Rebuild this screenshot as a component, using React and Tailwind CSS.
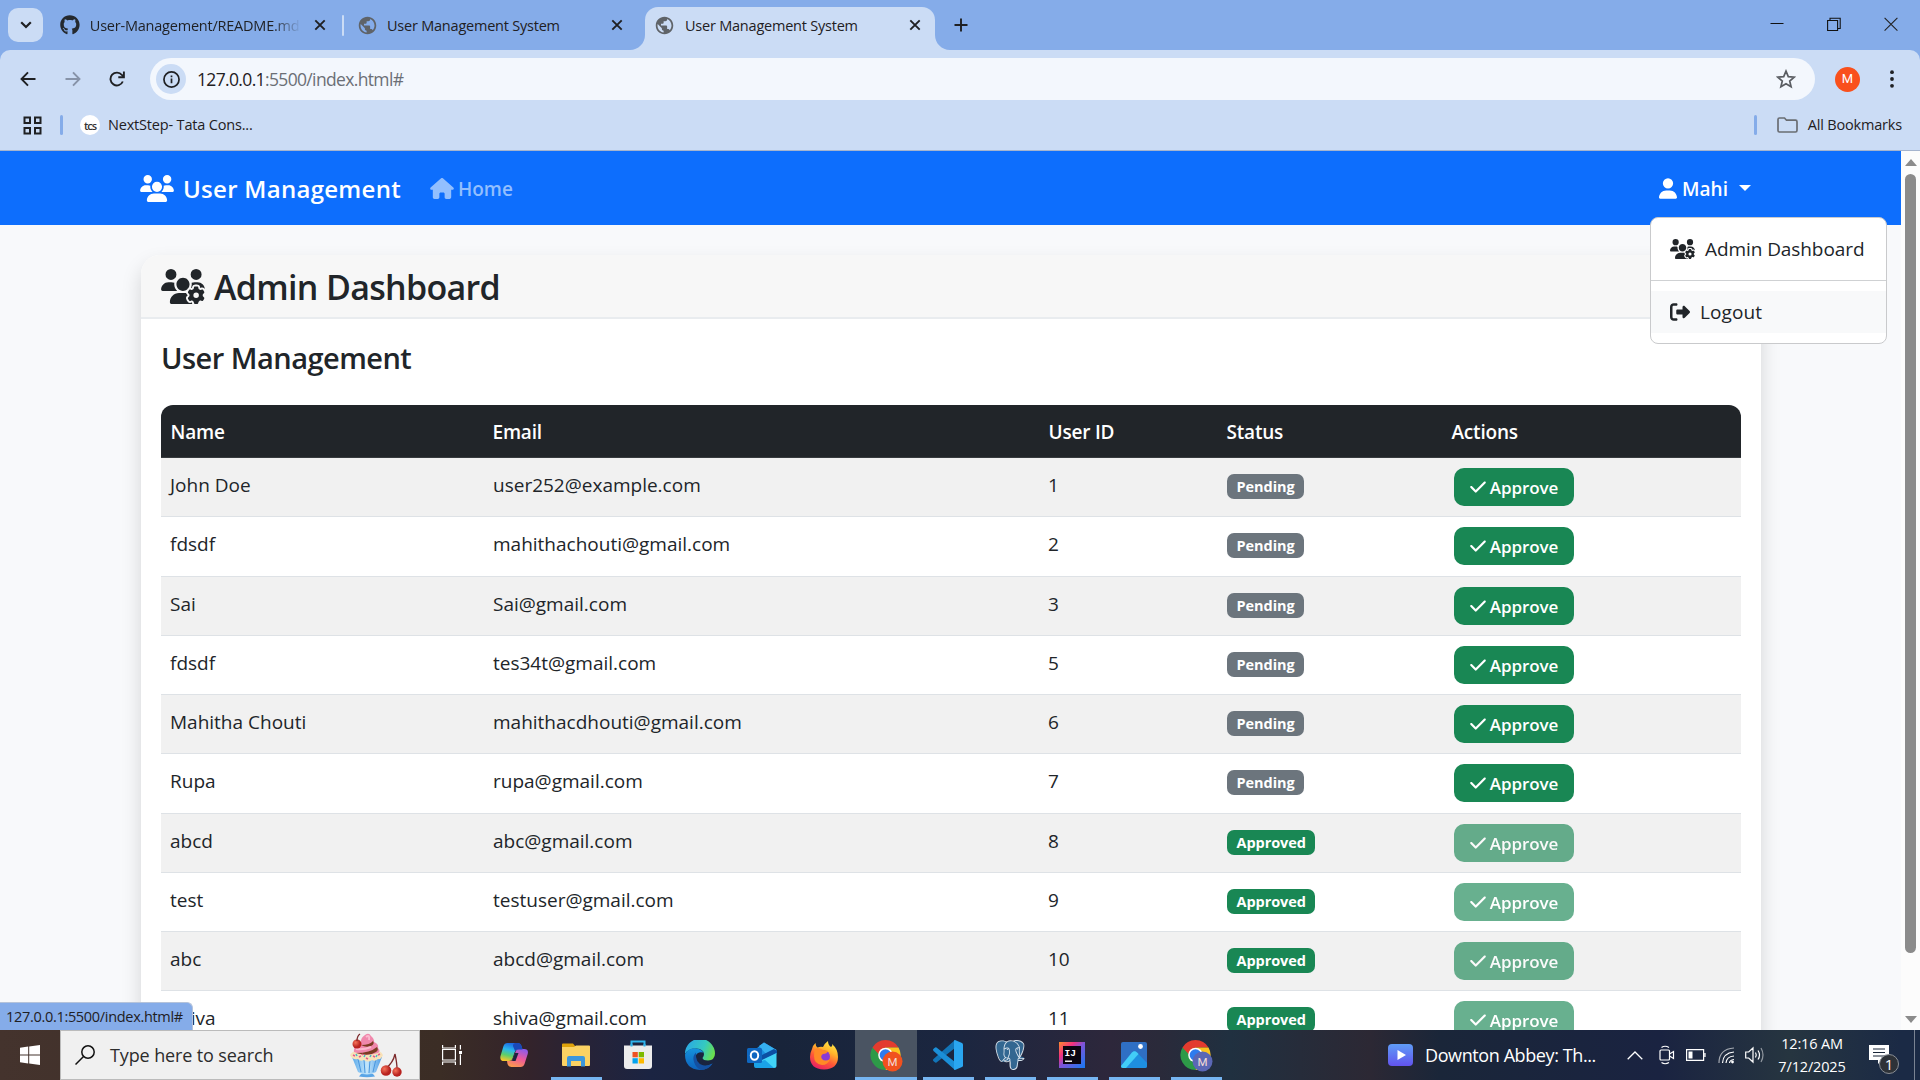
import React from "react";
import { FaUsers, FaHouse, FaUser, FaUsersGear, FaRightFromBracket, FaCheck, FaGithub } from "react-icons/fa6";
import { MdPublic } from "react-icons/md";
import { SiPostgresql } from "react-icons/si";

const users = [
  ["John Doe", "user252@example.com", 1, false],
  ["fdsdf", "mahithachouti@gmail.com", 2, false],
  ["Sai", "Sai@gmail.com", 3, false],
  ["fdsdf", "tes34t@gmail.com", 5, false],
  ["Mahitha Chouti", "mahithacdhouti@gmail.com", 6, false],
  ["Rupa", "rupa@gmail.com", 7, false],
  ["abcd", "abc@gmail.com", 8, true],
  ["test", "testuser@gmail.com", 9, true],
  ["abc", "abcd@gmail.com", 10, true],
  ["shiva", "shiva@gmail.com", 11, true],
];

const COLS = "grid grid-cols-[322px_556px_178px_225px_299px]";

function CloseX({ className = "" }) {
  return (
    <svg viewBox="0 0 12 12" className={`size-3 shrink-0 ${className}`} stroke="#1f2023" strokeWidth="1.9" fill="none">
      <path d="M1.3 1.3l9.4 9.4M10.7 1.3l-9.4 9.4" />
    </svg>
  );
}

function TabStrip() {
  return (
    <div className="flex h-[50px] shrink-0 items-start bg-[#85ace9] text-[14.5px] tracking-[-0.22px] text-[#1f2023]">
      <div className="mt-2 ml-2 flex h-[34px] w-[35px] items-center justify-center rounded-[10px] bg-[#cbdcf5]">
        <svg viewBox="0 0 12 8" className="h-2 w-3" stroke="#1f2023" strokeWidth="2.2" fill="none"><path d="M1.2 1.2L6 6l4.8-4.8" /></svg>
      </div>
      <div className="ml-[17px] flex h-[50px] w-[284px] items-center">
        <FaGithub className="size-5 text-[#24292f]" />
        <span className="ml-2.5 w-[211px] overflow-hidden pt-0.5 whitespace-nowrap [mask-image:linear-gradient(to_right,#000_182px,transparent_211px)]">User-Management/README.md</span>
        <CloseX className="ml-[15px]" />
        <span className="ml-4 h-[21px] w-0.5 rounded bg-[#cbdcf5]" />
      </div>
      <div className="ml-[13px] flex h-[50px] w-[273px] items-center">
        <MdPublic className="size-[21px] text-[#5f6368]" />
        <span className="ml-[9px] w-[224px] pt-0.5 whitespace-nowrap">User Management System</span>
        <CloseX />
      </div>
      <svg viewBox="0 0 15 15" className="mt-[35px] size-[15px] shrink-0" fill="#cbdcf5"><path d="M15 0v15H0C8.300 15 15 8.300 15 0z" /></svg>
      <div className="mt-[7px] flex h-[43px] w-[290px] items-center rounded-t-[13px] bg-[#cbdcf5] pr-[14px] pb-[7px] pl-[9px]">
        <MdPublic className="size-[21px] text-[#5f6368]" />
        <span className="ml-[10px] flex-1 pt-0.5 whitespace-nowrap">User Management System</span>
        <CloseX />
      </div>
      <svg viewBox="0 0 15 15" className="mt-[35px] size-[15px] shrink-0" fill="#cbdcf5"><path d="M0 0v15h15C6.700 15 0 8.300 0 0z" /></svg>
      <svg viewBox="0 0 14 14" className="mt-[18px] ml-1 size-3.5" stroke="#1f2023" strokeWidth="1.9"><path d="M7 .5v13M.5 7h13" /></svg>
      <div className="mt-[17px] mr-[22px] ml-auto flex gap-[43px]">
        <svg viewBox="0 0 14 14" className="size-3.5" stroke="#111" strokeWidth="1"><path d="M.5 6.500h13" /></svg>
        <svg viewBox="0 0 14 14" className="size-3.5" stroke="#111" strokeWidth="1.1" fill="none"><path d="M.6 3.500h10v10h-10zM3 3.500V1.200h10.200v10.300H10.700" /></svg>
        <svg viewBox="0 0 14 14" className="size-3.5" stroke="#222" strokeWidth="1.1"><path d="M.6 .8l12.800 12.800M13.400 .8L.6 13.600" /></svg>
      </div>
    </div>
  );
}

function Toolbar() {
  return (
    <div className="h-[101px] shrink-0 bg-[#85ace9]">
      <div className="flex h-[101px] flex-col rounded-t-[10px] bg-[#cbdcf5] pt-2">
        <div className="flex h-[42px] items-center">
          <svg viewBox="0 0 16 16" className="ml-5 size-4" stroke="#1f2023" strokeWidth="1.9" fill="none"><path d="M15.500 8H1.800M8 1.300L1.500 8 8 14.700" /></svg>
          <svg viewBox="0 0 16 16" className="ml-[29px] size-4" stroke="#8793a8" strokeWidth="1.900" fill="none"><path d="M.5 8h13.700M8 1.300L14.500 8 8 14.700" /></svg>
          <svg viewBox="0 0 16 16" className="ml-7 size-4" stroke="#1f2023" strokeWidth="1.900" fill="none"><path d="M13.800 10.500A6.400 6.400 0 1 1 12.900 4l1.700 1.900" /><path d="M14.900 .5v5.700H9.300" /></svg>
          <div className="ml-[25px] flex h-[42px] w-[1665px] items-center rounded-full bg-[#f3f7fd]">
            <div className="ml-1.5 flex size-[30px] items-center justify-center rounded-full bg-[#cbdcf5]">
              <svg viewBox="0 0 18 18" className="size-[17px]" stroke="#1f2023" strokeWidth="1.800" fill="none"><circle cx="9" cy="9" r="8" /><path d="M9 8v5M9 4.800v1.900" /></svg>
            </div>
            <span className="ml-[11px] text-[17.500px] tracking-[-0.650px] text-[#1f2023]">127.0.0.1<span className="text-[#6b6f76]">:5500/index.html#</span></span>
            <svg viewBox="0 0 20 20" className="mr-[19px] ml-auto size-5" stroke="#5a5d62" strokeWidth="1.700" fill="none"><path d="M10 2.100l2.300 5.500 5.900.5-4.500 3.900 1.400 5.800L10 14.700l-5.100 3.100 1.400-5.800L1.800 8.100l5.900-.5z" /></svg>
          </div>
          <div className="ml-5 flex size-[25px] items-center justify-center rounded-full bg-[#f9501c] font-[Roboto] text-[13px] text-white">M</div>
          <svg viewBox="0 0 4 18" className="ml-[30px] h-[18px] w-1" fill="#1f2023"><circle cx="2" cy="2.200" r="1.900" /><circle cx="2" cy="9" r="1.900" /><circle cx="2" cy="15.800" r="1.900" /></svg>
        </div>
        <div className="flex h-[51px] items-center border-b border-[#a5b4ce] text-[14.500px] tracking-[-0.180px] text-[#1f2023]">
          <svg viewBox="0 0 19 19" className="ml-[23px] size-[19px]" stroke="#1f2023" strokeWidth="2" fill="none"><path d="M1.500 1.500h5.500v5.500H1.500zM12 1.500h5.500v5.500H12zM1.500 12h5.500v5.500H1.500zM12 12h5.500v5.500H12z" /></svg>
          <span className="ml-[18px] h-5 w-[3px] rounded bg-[#85ace9]" />
          <div className="ml-[17px] flex size-5 items-center justify-center rounded-full bg-white text-[11px] leading-none font-semibold tracking-[-1px] text-[#333]">tcs</div>
          <span className="ml-2">NextStep- Tata Cons...</span>
          <span className="ml-auto h-5 w-[3px] rounded bg-[#85ace9]" />
          <svg viewBox="0 0 21 16" className="ml-5 h-4 w-[21px]" stroke="#6a6d72" strokeWidth="1.700" fill="none"><path d="M1 2.500Q1 1 2.500 1H7.500l2 2.200h9Q20 3.200 20 4.700v8.600Q20 15 18.500 15h-16Q1 15 1 13.500z" /></svg>
          <span className="mr-[18px] ml-2.5">All Bookmarks</span>
        </div>
      </div>
    </div>
  );
}

function Navbar() {
  return (
    <div className="relative flex h-[74px] shrink-0 items-center bg-[#0d6efd] pl-[140px] text-[19px] font-semibold text-white">
      <FaUsers className="h-[27px] w-[34px]" />
      <span className="ml-[9px] w-[218px] pt-0.5 text-[24px] tracking-[0.280px] whitespace-nowrap">User Management</span>
      <div className="ml-[29px] flex items-center text-[#92bffe]">
        <FaHouse className="h-[21px] w-6" />
        <span className="ml-1 pt-0.5">Home</span>
      </div>
      <div className="ml-auto flex items-center">
        <FaUser className="h-[21px] w-[18px]" />
        <span className="ml-[5px] pt-0.5">Mahi</span>
        <span className="mr-[150px] ml-[11px] border-x-[6px] border-t-[6px] border-x-transparent border-t-white" />
      </div>
      <Menu />
    </div>
  );
}

function Menu() {
  return (
    <div className="absolute top-[66px] right-[14px] z-10 flex h-[127px] w-[237px] flex-col rounded-lg border border-[#c9cacc] bg-white text-[19px] font-normal text-[#212529]">
      <div className="mt-[10px] flex h-[42px] items-center pl-[19px]">
        <FaUsersGear className="h-5 w-[25px]" />
        <span className="ml-[10px] tracking-[-0.080px]">Admin Dashboard</span>
      </div>
      <div className="mt-[10px] h-px bg-[#cfd1d3]" />
      <div className="mt-[10px] flex h-[42px] items-center bg-[#f8f9fa] pl-[19px]">
        <FaRightFromBracket className="size-5" />
        <span className="ml-[10px] tracking-[0.080px]">Logout</span>
      </div>
    </div>
  );
}

function Row({ user, striped }) {
  const [name, email, id, approved] = user;
  return (
    <div className={`${COLS} h-[59.250px] border-b border-[#dee2e6] text-[19px] leading-[30px] text-[#212529] ${striped ? "bg-[#f1f1f1]" : "bg-white"}`}>
      <div className="pt-[12px] pl-[9px]">{name}</div>
      <div className="pt-[12px] pl-2.5">{email}</div>
      <div className="pt-[12px] pl-[9px]">{id}</div>
      <div className="pt-4 pl-2.5">
        <div className={`flex h-[25px] w-fit items-center rounded-[7px] px-[9.500px] pt-px text-[14.500px] font-bold tracking-[-0.060px] text-white ${approved ? "bg-[#198754]" : "bg-[#6c757d]"}`}>{approved ? "Approved" : "Pending"}</div>
      </div>
      <div className="pt-2.5 pl-3">
        <div className={`flex h-[38px] w-[120px] items-center justify-center rounded-[10px] bg-[#198754] text-[17px] font-semibold tracking-[-0.100px] text-white ${approved ? "opacity-65" : ""}`}>
          <FaCheck className="mr-1 h-[18px] w-4" />
          <span className="pt-0.5">Approve</span>
        </div>
      </div>
    </div>
  );
}

function Page() {
  return (
    <div className="flex min-h-0 flex-1">
      <div className="flex min-w-0 flex-1 flex-col bg-[#f8f9fb]">
        <Navbar />
        <div className="min-h-0 flex-1 overflow-hidden">
          <div className="mt-[30px] ml-[141px] h-[1000px] w-[1620px] rounded-[19px] bg-white shadow-[0_10px_20px_rgba(0,0,0,0.15)]">
            <div className="flex h-16 items-center rounded-t-[19px] border-b-2 border-[#e9ecef] bg-[#f7f7f7] pl-5 text-[#212529]">
              <FaUsersGear className="h-[35px] w-11" />
              <span className="ml-[9px] pt-0.5 text-[34px] leading-[42px] font-semibold tracking-[-0.680px]">Admin Dashboard</span>
            </div>
            <div className="px-5 pt-[19px]">
              <h2 className="text-[29px] leading-[39px] font-semibold tracking-[-0.530px] text-[#212529]">User Management</h2>
              <div className="mt-7 overflow-hidden rounded-t-xl">
                <div className={`${COLS} h-[53px] items-center border-b border-[#373b3e] bg-[#212529] pt-0.5 text-[19px] font-semibold tracking-[-0.200px] text-white *:pl-[9.500px]`}>
                  <div>Name</div>
                  <div>Email</div>
                  <div>User ID</div>
                  <div>Status</div>
                  <div>Actions</div>
                </div>
                {users.map((u, i) => <Row key={u[1]} user={u} striped={i % 2 === 0} />)}
              </div>
            </div>
          </div>
        </div>
      </div>
      <div className="flex w-[19px] flex-col items-center bg-[#fcfcfc] pt-2 pb-[7px]">
        <span className="border-x-[6.500px] border-b-[7px] border-x-transparent border-b-[#8b8b8b]" />
        <span className="mt-2 h-[779px] w-[11px] rounded-full bg-[#8b8b8b]" />
        <span className="mt-auto border-x-[6.500px] border-t-[7px] border-x-transparent border-t-[#8b8b8b]" />
      </div>
    </div>
  );
}

function Sundae() {
  return (
    <svg viewBox="0 0 54 45" className="h-[45px] w-[54px]">
      <defs>
        <linearGradient id="bowl" x1="0" x2="1"><stop offset="0" stopColor="#5aa9ea" /><stop offset=".5" stopColor="#c3e6fb" /><stop offset="1" stopColor="#4f9de6" /></linearGradient>
        <radialGradient id="cherry" cx=".35" cy=".35"><stop offset="0" stopColor="#f5735a" /><stop offset="1" stopColor="#b8221f" /></radialGradient>
      </defs>
      <path d="M13 41h12l2 2.500q-8 1.500-16 0z" fill="#5aa5e6" />
      <path d="M4 24h30l-6 15q-9 5-18 0z" fill="url(#bowl)" />
      <path d="M10 26l3 13M16 27l1 13M22 27l-1 13M28 26l-3 13" stroke="#4996de" strokeWidth="1" />
      <path d="M2 22q3-6 17-6t16 6q-2 5-5 4-3 3-6 1-4 3-8 0-4 2-6-1-6 1-8-4z" fill="#f8e2b8" />
      <path d="M6 19q-1-7 7-8-1-6 4-9 4-3 6 1 4 3 3 6 5 2 4 6 3 3 0 5-12 4-24-1z" fill="#f088ac" />
      <path d="M8 20q14 0 21-6 2 3-1 5-7 5-20 1zM13 12q9 0 12-4 2 3-2 5-5 2-10-1z" fill="#7b3b22" />
      <path d="M18 4q4-3 3 3M8 16q8 1 15-2" stroke="#fbb9cf" strokeWidth="2" fill="none" />
      <path d="M5 22l2 1M11 24l2-1M18 25l2 1M25 23l2 1M30 22l2-1M14 21l1 1" stroke="#e8588e" strokeWidth="1.500" />
      <path d="M8 21l1 2M16 24l1-2M22 24l1-2M28 24l1-2" stroke="#47b6c9" strokeWidth="1.500" />
      <circle cx="9" cy="11" r="4.500" fill="url(#cherry)" />
      <path d="M9 8Q9 3 12 1M47 21q-2 9-9 14M47 21q2 9 2 15" stroke="#7c2a2c" strokeWidth="1.300" fill="none" />
      <circle cx="38" cy="37.500" r="5.300" fill="url(#cherry)" />
      <circle cx="49" cy="39" r="4.700" fill="url(#cherry)" />
    </svg>
  );
}

function ChromeIcon({ badge }) {
  return (
    <svg viewBox="0 0 34 34" className="size-[34px] translate-x-px translate-y-px">
      <path d="M15.500 16L2.500 8.500A15 15 0 0 0 15.500 31l7-11z" fill="#2d9a48" />
      <path d="M15.500 16h-6L2.500 8.500a15 15 0 0 1 26 0h-13z" fill="#e33b2e" />
      <path d="M15.500 8.500h13a15 15 0 0 1-13 22.500l6.500-11.500z" fill="#fcc31f" />
      <circle cx="15.500" cy="16" r="7.300" fill="#fff" />
      <circle cx="15.500" cy="16" r="5.800" fill="#2f7bee" />
      <circle cx="22.500" cy="22.500" r="10" className={badge} />
      <text x="22.500" y="26.700" textAnchor="middle" fontSize="11.500" fontFamily="Roboto" fill="#f3dcd6">M</text>
    </svg>
  );
}

function TaskItem({ open, active, children }) {
  return (
    <div className={`flex h-[50px] w-[62px] flex-col items-center ${active ? "bg-[#4a5462]" : ""}`}>
      <div className="flex h-[47px] items-center pt-[3px]">{children}</div>
      {open && <div className={`h-[3px] bg-[#76b5f1] ${active ? "w-full" : "w-[51px]"}`} />}
    </div>
  );
}

function Taskbar() {
  return (
    <div className="flex h-[50px] shrink-0 items-center bg-[linear-gradient(90deg,#44332d_0px,#3b2d25_440px,#33232b_530px,#262338_590px,#1b2442_650px,#18243a_780px,#1b2640_960px,#2d273b_1110px,#2a2a3a_1160px,#203040_1230px,#2c2834_1370px,#1a2639_1440px,#1a2341_1660px,#263540_1790px,#1b2a45_1900px)] text-white">
      <div className="flex w-[60px] justify-center">
        <svg viewBox="0 0 20 20" className="size-5" fill="#fff"><path d="M0 2.700L8.200 1.600v8H0zM9.200 1.500L20 0v9.600H9.200zM0 10.500h8.200v7.900L0 17.300zM9.200 10.500H20V20L9.200 18.500z" /></svg>
      </div>
      <div className="mr-px flex h-[50px] w-[360px] items-center border border-[#bbb] bg-[#f0f0f0] pl-3.5">
        <svg viewBox="0 0 20 20" className="size-5" stroke="#111" strokeWidth="1.500" fill="none"><circle cx="13" cy="7" r="6.200" /><path d="M8.500 11.500L.5 19.500" /></svg>
        <span className="ml-[15px] w-[163px] text-[18px] tracking-[-0.120px] whitespace-nowrap text-[#2c2c2c]">Type here to search</span>
        <div className="ml-[75px]"><Sundae /></div>
      </div>
      <TaskItem>
        <svg viewBox="0 0 20 20" className="size-5" stroke="#fff" strokeWidth="1.200" fill="none"><path d="M.6 4.500h12.800v10.500H.6zM.6 0v3h12.800V0M.6 20v-3h12.800v3M18.400 0v4.500M18.400 9.500V20" /><path d="M17 6h3v3h-3z" fill="#fff" stroke="none" /></svg>
      </TaskItem>
      <TaskItem>
        <svg viewBox="0 0 28 26" className="h-[26px] w-7">
          <defs>
            <linearGradient id="cpa" x1=".6" y1="0" x2=".3" y2="1"><stop offset="0" stopColor="#1b5fe0" /><stop offset=".4" stopColor="#2ab7ee" /><stop offset=".7" stopColor="#5ccf6b" /><stop offset="1" stopColor="#f5c62c" /></linearGradient>
            <linearGradient id="cpb" x1=".7" y1="0" x2=".3" y2="1"><stop offset="0" stopColor="#8f5bea" /><stop offset=".5" stopColor="#ee5a9a" /><stop offset="1" stopColor="#fb9a4b" /></linearGradient>
          </defs>
          <path d="M7.500 1h10q3 0 4 3l1 3.500h-5q-2 0-3 3l-2 6q-.8 2.500-3.500 2.500H4Q-.5 19 .5 14L3.500 4Q4.500 1 7.500 1z" fill="url(#cpa)" />
          <path d="M20.500 25h-9q-3 0-4-3L7 19h3q2.500 0 3.300-2.500l2.200-6.500Q16.300 7 19 7h5q5 0 3.700 5L24.500 22q-1 3-4 3z" fill="url(#cpb)" />
          <path d="M15 1h2.500q3 0 4 3l1 3.500h-5q-1.500 0-2.500 1.500L13 4q-.5-2 2-3z" fill="#1a48b8" />
          <path d="M15 11l-3 8h3.500l3-8z" fill="#1b2442" />
        </svg>
      </TaskItem>
      <TaskItem open>
        <svg viewBox="0 0 28 24" className="h-6 w-7"><path d="M0 1.500Q0 .5 1 .5h10l2.500 3H27q1 0 1 1V6H0z" fill="#dfa20a" /><path d="M0 4h12l2-1.500h13q1 0 1 1V22q0 1-1 1H1q-1 0-1-1z" fill="#fbd263" /><path d="M5 23.500V15q0-2 2-2h14q2 0 2 2v8.500h-4V18H9v5.500z" fill="#3c97dc" /></svg>
      </TaskItem>
      <TaskItem>
        <svg viewBox="0 0 30 30" className="size-[30px]"><path d="M8.500 7V1.500h13V7" stroke="#2fb4ec" strokeWidth="2" fill="none" /><path d="M1 5.500h28V26q0 3-3 3H4q-3 0-3-3z" fill="#ececec" /><path d="M9.500 12h5.300v5.300H9.500z" fill="#ef5123" /><path d="M15.700 12H21v5.300h-5.300z" fill="#7db900" /><path d="M9.500 18.200h5.300v5.300H9.500z" fill="#03a3ee" /><path d="M15.700 18.200H21v5.300h-5.300z" fill="#fdb900" /><path d="M8.500 6.500V4M21.500 6.500V4" stroke="#2fb4ec" strokeWidth="2" /></svg>
      </TaskItem>
      <TaskItem>
        <svg viewBox="0 0 30 30" className="size-[30px]">
          <defs>
            <linearGradient id="eg" x1="0" y1=".3" x2="1" y2=".6"><stop offset="0" stopColor="#2aa8e6" /><stop offset=".6" stopColor="#35c9c0" /><stop offset="1" stopColor="#6be04a" /></linearGradient>
            <linearGradient id="eb" x1="0" y1="0" x2="0" y2="1"><stop offset="0" stopColor="#1592dd" /><stop offset="1" stopColor="#0d62bc" /></linearGradient>
          </defs>
          <path d="M0 14A15 15 0 0 1 30 13.500Q30 20 23 20.500q-5 0-5.500-2.500 1.500-1.500 1.500-4-.5-5-7.500-5.500Q3.500 8 0 14z" fill="url(#eg)" />
          <path d="M0 14.500Q3 8 10 8.200q6 .3 8.500 4.300-6-1.500-8 3.500-1 9 8 10 5 0 9-2.500Q23.500 30 15 30 0 29 0 14.500z" fill="url(#eb)" />
          <path d="M11 12.500q-4 4-2 9.500 2 6 7 8 7.500 0 11.500-6.500-5 3-9.500 1.800-8-2.300-7-12.800z" fill="#1450a0" />
        </svg>
      </TaskItem>
      <TaskItem>
        <svg viewBox="0 0 30 27" className="h-[27px] w-[30px]"><path d="M5 10L17 .5 29.500 8v4L17 20 5 18z" fill="#1b8fdf" /><path d="M12 4l5-3.500L29.500 8 20 13z" fill="#36b0f0" /><path d="M9 16l18-9 3 2v2L12 20z" fill="#0c4fa3" /><path d="M29.500 11v12.500q0 2.500-2.500 2.500H9l-2-4z" fill="#41d3f7" /><path d="M7 21l11-3 9 8H9q-2 0-2-2z" fill="#1aa3e8" /><rect x="0" y="6" width="15" height="15" rx="1.500" fill="#0f67c0" /><ellipse cx="7.500" cy="13.500" rx="3.700" ry="4.200" stroke="#fff" strokeWidth="2" fill="none" /></svg>
      </TaskItem>
      <TaskItem>
        <svg viewBox="0 0 28 29" className="h-[29px] w-7">
          <defs>
            <linearGradient id="ff" x1=".8" y1="0" x2=".3" y2="1"><stop offset="0" stopColor="#fff04a" /><stop offset=".35" stopColor="#ffb32b" /><stop offset=".65" stopColor="#ff5a36" /><stop offset="1" stopColor="#e81f64" /></linearGradient>
          </defs>
          <path d="M2 8Q3 4 5.500 2q0 3 2 4.500Q10 5.500 13 6q2-4 5-6 0 4 3 6 2-1 1-3 6 5 6 13 0 12-14 12.500Q0 28 0 16q0-4 2-8z" fill="url(#ff)" />
          <circle cx="14" cy="15.500" r="6" fill="#8a3ad6" />
          <path d="M5 8q4-2 8 1l5 1q-1 3-5 3-3 2-1 5 3 3 8 0-2 6-8 6-8-1-8-9 0-4 1-7z" fill="#ff8a26" />
        </svg>
      </TaskItem>
      <TaskItem open active><ChromeIcon badge="fill-[#f0511f]" /></TaskItem>
      <TaskItem open>
        <svg viewBox="0 0 30 30" className="size-[30px]"><path d="M22 0v8L3.500 22.500Q2.500 23 1.800 22.300L.3 21Q-.3 20 .5 19z" fill="#1275b8" /><path d="M22 30v-8L3.500 7.500Q2.500 7 1.800 7.700L.3 9Q-.3 10 .5 11z" fill="#1b8fd8" /><path d="M22 0l7 3q1 .5 1 1.500v21q0 1-1 1.500l-7 3q-1 0-1-1V1q0-1 1-1z" fill="#2aa6f0" /></svg>
      </TaskItem>
      <TaskItem open>
        <svg viewBox="0 0 24 24" className="size-[30px]">
          <path d="M6 .6Q8 .5 9.500 1.300 12 .3 14.500 1 19-.5 22 2q2 3-1.500 11l2.700.8q-1 2-4.200 2.200l-1 5q-1 2.500-4 2.500-1.500 0-1.500-2.500l-.5-4.500q-1.500.5-3 0-1.500 2-4 .5Q.5 10 .7 5 1.500.5 6 .6z" fill="#336791" />
          <SiPostgresql size={24} className="fill-[#d5e0ea]" />
        </svg>
      </TaskItem>
      <TaskItem open>
        <svg viewBox="0 0 26 26" className="size-[26px]">
          <defs><linearGradient id="ij" x1="0" y1="0" x2="1" y2="1"><stop offset="0" stopColor="#fb8c2c" /><stop offset=".3" stopColor="#f2307f" /><stop offset=".5" stopColor="#7d54d8" /><stop offset="1" stopColor="#147bf4" /></linearGradient></defs>
          <path d="M0 0h26v26H0z" fill="url(#ij)" /><path d="M4 4h18v18H4z" fill="#0a0510" />
          <text x="5.500" y="13.500" fontSize="9.500" fontWeight="700" fontFamily="Liberation Mono" fill="#fff">IJ</text>
          <path d="M6 18.500h7v1.400H6z" fill="#fff" />
        </svg>
      </TaskItem>
      <TaskItem open>
        <svg viewBox="0 0 26 26" className="size-[26px]"><rect width="26" height="26" rx="2" fill="#2f6fc4" /><path d="M0 24L11 10.500q2.500-2.500 5 0L26 21v3q0 2-2 2H2q-2 0-2-2z" fill="#1e8fe0" /><path d="M0 24L11 10.500q2.500-2.500 5 0l1.500 1.500L5 26H2q-2 0-2-2z" fill="#42cdf7" /><circle cx="19.500" cy="4.500" r="2.400" fill="#fff" /></svg>
      </TaskItem>
      <TaskItem open><ChromeIcon badge="fill-[#5b67b5]" /></TaskItem>

      <div className="ml-auto flex items-center">
        <svg viewBox="0 0 25 22" className="h-[22px] w-[25px]"><defs><linearGradient id="pl" x1="0" y1="0" x2="0" y2="1"><stop offset="0" stopColor="#5f9cf6" /><stop offset="1" stopColor="#6253ee" /></linearGradient></defs><rect width="25" height="22" rx="4" fill="url(#pl)" /><path d="M9.500 6l8.500 5-8.500 5z" fill="#fff" /></svg>
        <span className="ml-[12px] w-[171px] text-[18px] tracking-[-0.400px] whitespace-nowrap">Downton Abbey: Th...</span>
        <svg viewBox="0 0 16 9" className="ml-[31px] h-[9px] w-4" stroke="#fff" strokeWidth="1.300" fill="none"><path d="M.7 8.300L8 1l7.300 7.300" /></svg>
        <svg viewBox="0 0 16 20" className="ml-4 h-5 w-4" stroke="#fff" strokeWidth="1.200" fill="none"><rect x="1" y="5" width="9.500" height="10" rx="1" /><path d="M10.500 9l4-2.500v7l-4-2.500M2.500 2.500Q6 0 10 2.500M2.500 17.500q3.500 2.500 7.500 0" /></svg>
        <svg viewBox="0 0 20 12" className="ml-[11px] h-3 w-5" stroke="#fff" strokeWidth="1.200" fill="none"><path d="M.6 .6h17v10.800H.6zM19 4v4" /><path d="M2.500 2.500h4v7h-4z" fill="#fff" stroke="none" /></svg>
        <svg viewBox="0 0 17 17" className="ml-3 size-[17px]" stroke="#fff" strokeWidth="1.200" fill="none"><path d="M1 16Q1 2 16 1" opacity=".6" /><path d="M4.500 16Q5 6 16 5M8 16q.5-6.500 8-7M11.500 16q.3-3 4.500-3.500" /><circle cx="14.500" cy="15" r="1.400" fill="#fff" stroke="none" /></svg>
        <svg viewBox="0 0 20 18" className="ml-[10px] h-[18px] w-5" stroke="#fff" strokeWidth="1.200" fill="none"><path d="M.7 6h3L8 2v14l-4.300-4H.7zM10.500 6.500q1.500 2.500 0 5M13 4.500q3 4.500 0 9" /><path d="M16 2q4 7 0 14" opacity=".5" /></svg>
        <div className="ml-3 flex w-[70px] flex-col items-center text-[14.500px] leading-[23px] tracking-[-0.150px]">
          <span>12:16 AM</span>
          <span>7/12/2025</span>
        </div>
        <div className="relative ml-[22px] h-[30px] w-[30px]">
          <svg viewBox="0 0 20 19" className="mt-[5px] h-[19px] w-5"><path d="M0 0h20v15h-7l-4 4v-4H0z" fill="#fff" /><path d="M4 4h12M4 7.500h12M4 11h12" stroke="#1a2639" strokeWidth="1.200" /></svg>
          <div className="absolute top-[14px] left-[10px] flex size-5 items-center justify-center rounded-full border border-[#8a8f96] bg-[#2e3238] text-[15px] leading-none">1</div>
        </div>
        <span className="mr-[5px] ml-[15px] h-[50px] w-px bg-[#7a8392]" />
      </div>
    </div>
  );
}

export default function App() {
  return (
    <div className="relative flex h-[1080px] w-[1920px] flex-col overflow-hidden font-['Open_Sans',sans-serif]">
      <TabStrip />
      <Toolbar />
      <Page />
      <Taskbar />
      <div className="absolute bottom-[50px] left-0 flex h-[28px] w-[193px] items-center rounded-tr-md border-t border-r border-[#b5c3da] bg-[#85ace9] pl-1.5 text-[14.500px] tracking-[-0.310px] whitespace-nowrap text-[#1f2023]">127.0.0.1:5500/index.html#</div>
    </div>
  );
}
